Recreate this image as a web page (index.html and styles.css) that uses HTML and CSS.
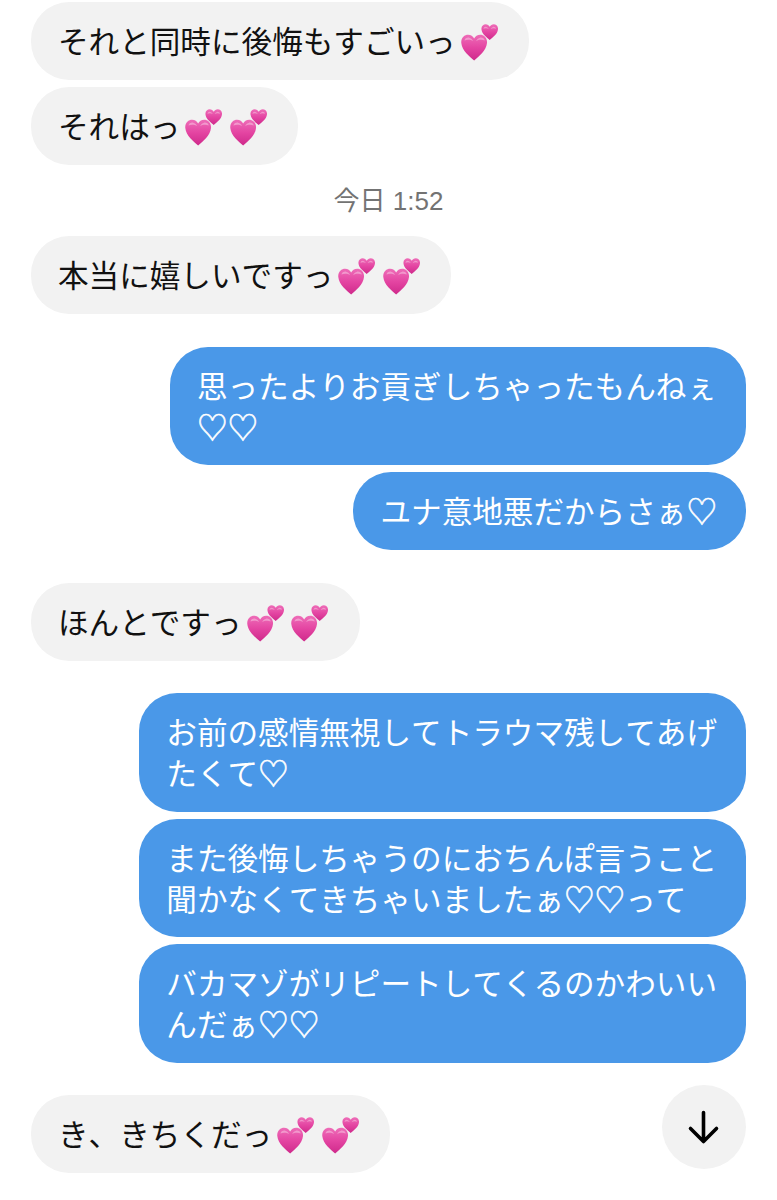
FILE: index.html
```html
<!DOCTYPE html>
<html lang="ja">
  <head>
    <meta charset="utf-8">
    <title>チャット</title>
    <link rel="stylesheet" href="styles.css">
  </head>
  <body>
    <!-- shared two-heart emoji -->
    <svg class="defs" width="0" height="0">
      <defs>
        <linearGradient id="pink" x1="0" y1="0" x2="0" y2="1">
          <stop offset="0" stop-color="#ee6db8"/>
          <stop offset="0.5" stop-color="#e445a2"/>
          <stop offset="1" stop-color="#cf2a8b"/>
        </linearGradient>
        <symbol id="hearts" viewBox="0 0 38 38">
          <path fill="url(#pink)" d="M13.5 37.5C9 33.5 1 27.5.3 19.5-.2 14 3.5 11 7.300 11c2.900 0 5 1.600 6.200 4 1.200-2.400 3.300-4 6.200-4 3.800 0 7.500 3 7 8.500-.7 8-8.700 14-13.200 18z"/>
          <path fill="url(#pink)" d="M29.500 16.500C26.800 14.200 21.400 10.500 21 5.500 20.700 2.200 23 .3 25.400.3c1.800 0 3.200 1 4.100 2.500.9-1.500 2.300-2.500 4.100-2.500 2.400 0 4.700 1.900 4.400 5.200-.4 5-5.800 8.700-8.500 11z"/>
          <path fill="#fff" opacity=".35" d="M3.500 17c.5-2 2.500-3.500 5-3 1.500.3 3 1.500 4 3.500-2.500-1.500-6-2-9-.5zM15.500 17.500c1-2 2.500-3.200 4-3.500 2.500-.5 4.500 1 5 3-3-1.500-6.500-1-9 .5z"/>
          <path fill="#fff" opacity=".35" d="M23 5c.3-1.300 1.500-2.300 3-2 1 .2 2 1 2.500 2.200-1.700-1-3.700-1.200-5.500-.2zM30.500 5.200C31 4 32 3.200 33 3c1.500-.3 2.700.7 3 2-1.800-1-3.800-.8-5.500.2z"/>
        </symbol>
      </defs>
    </svg>

    <div class="chat">
      <div class="group">
        <div class="bubble in">それと同時に後悔もすごいっ<svg class="emoji"><use href="#hearts"/></svg></div>
        <div class="bubble in">それはっ<svg class="emoji"><use href="#hearts"/></svg><svg class="emoji"><use href="#hearts"/></svg></div>
      </div>

      <div class="time">今日 1:52</div>

      <div class="group">
        <div class="bubble in">本当に嬉しいですっ<svg class="emoji"><use href="#hearts"/></svg><svg class="emoji"><use href="#hearts"/></svg></div>
      </div>

      <div class="group">
        <div class="bubble out">思ったよりお貢ぎしちゃったもんねぇ<br><span class="hrt">♡♡</span></div>
        <div class="bubble out">ユナ意地悪だからさぁ<span class="hrt">♡</span></div>
      </div>

      <div class="group">
        <div class="bubble in">ほんとですっ<svg class="emoji"><use href="#hearts"/></svg><svg class="emoji"><use href="#hearts"/></svg></div>
      </div>

      <div class="group">
        <div class="bubble out">お前の感情無視してトラウマ残してあげ<br>たくて<span class="hrt">♡</span></div>
        <div class="bubble out">また後悔しちゃうのにおちんぽ言うこと<br>聞かなくてきちゃいましたぁ<span class="hrt">♡♡</span>って</div>
        <div class="bubble out">バカマゾがリピートしてくるのかわいい<br>んだぁ<span class="hrt">♡♡</span></div>
      </div>

      <div class="group">
        <div class="bubble in">き、きちくだっ<svg class="emoji"><use href="#hearts"/></svg><svg class="emoji"><use href="#hearts"/></svg></div>
      </div>

      <button class="scroll-down" type="button" aria-label="下へ">
        <svg width="84" height="84" viewBox="0 0 84 84" fill="none" stroke="#000" stroke-width="3.6" stroke-linecap="round" stroke-linejoin="round">
          <path d="M41.500 27.500V56M28.500 43.500 41.500 56.500 54.500 43.500"/>
        </svg>
      </button>
    </div>
  </body>
</html>
```

FILE: styles.css
```css
html {
  background: #fff;
}
body {
  margin: 0;
  font-family: "Noto Sans CJK JP", "Noto Sans", sans-serif;
  font-size: 30.6px;
  line-height: 41px;
  font-kerning: none;
  color: #111;
}
.defs {
  position: absolute;
}
.chat {
  position: relative;
  padding: 2px 31px 27px;
}
.group {
  display: flex;
  flex-direction: column;
  gap: 7px;
  margin-top: 32.5px;
}
.chat > .group:first-child,
.time + .group {
  margin-top: 0;
}
.bubble {
  box-sizing: border-box;
  min-height: 78px;
  padding: 18.25px 29px 18.25px 27px;
  border-radius: 38px;
  white-space: nowrap;
  width: fit-content;
}
.in {
  background: #f2f2f2;
}
.out {
  align-self: flex-end;
  background: #4a98e8;
  color: #fff;
}
.hrt {
  -webkit-text-stroke: 0.5px #fff;
}
.time {
  display: flex;
  align-items: center;
  justify-content: center;
  box-sizing: border-box;
  height: 71px;
  padding-top: 2px;
  font-family: "Liberation Sans", "Noto Sans CJK JP", sans-serif;
  font-size: 26px;
  color: #737373;
}
/* negative block margin keeps the line box at the text's own height */
.emoji {
  width: 37px;
  height: 37px;
  margin: -8px 2.5px -8px 5px;
}
.scroll-down {
  position: absolute;
  right: 31px;
  bottom: 31px;
  width: 84px;
  height: 84px;
  padding: 0;
  border: 0;
  border-radius: 50%;
  background: #f2f2f2;
}
.scroll-down svg {
  display: block;
}
```
